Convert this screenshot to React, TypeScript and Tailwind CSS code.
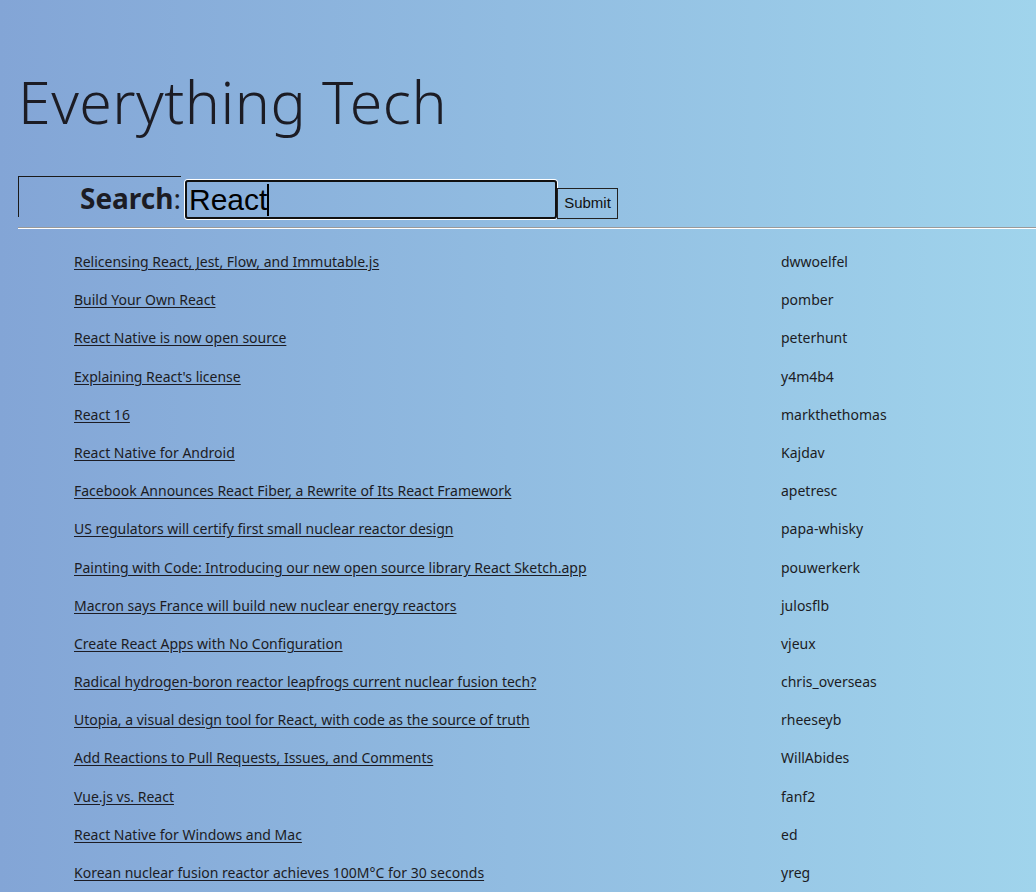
import React from "react";

const rows: [string, string][] = [
  ["Relicensing React, Jest, Flow, and Immutable.js", "dwwoelfel"],
  ["Build Your Own React", "pomber"],
  ["React Native is now open source", "peterhunt"],
  ["Explaining React's license", "y4m4b4"],
  ["React 16", "markthethomas"],
  ["React Native for Android", "Kajdav"],
  ["Facebook Announces React Fiber, a Rewrite of Its React Framework", "apetresc"],
  ["US regulators will certify first small nuclear reactor design", "papa-whisky"],
  ["Painting with Code: Introducing our new open source library React Sketch.app", "pouwerkerk"],
  ["Macron says France will build new nuclear energy reactors", "julosflb"],
  ["Create React Apps with No Configuration", "vjeux"],
  ["Radical hydrogen-boron reactor leapfrogs current nuclear fusion tech?", "chris_overseas"],
  ["Utopia, a visual design tool for React, with code as the source of truth", "rheeseyb"],
  ["Add Reactions to Pull Requests, Issues, and Comments", "WillAbides"],
  ["Vue.js vs. React", "fanf2"],
  ["React Native for Windows and Mac", "ed"],
  ["Korean nuclear fusion reactor achieves 100M°C for 30 seconds", "yreg"],
];

export default function App() {
  return (
    <div
      className="w-[1036px] h-[892px] overflow-hidden bg-gradient-to-r from-[#83a5d6] to-[#a0d4ec] text-[#1c1c24]"
      style={{ fontFamily: '"Segoe UI", "Noto Sans", "Open Sans", sans-serif' }}
    >
      <h1 className="pl-[18px] pt-[61px] text-[59px] leading-[80px] font-light tracking-[0.5px] h-[176px]">
        Everything Tech
      </h1>
      <div className="flex items-start pl-[18px]">
        <div className="w-[163px] h-[41px] border-t border-l border-[#1a1a1a] flex justify-end items-center">
          <span className="text-[28px] font-bold leading-none mt-[2px]">Search</span>
          <span className="text-[28px] leading-none mt-[2px]">:</span>
        </div>
        <div className="ml-[4px] mt-[4px] rounded-[3px] ring-1 ring-white">
          <div
            className="w-[372px] h-[39px] border-2 border-[#111] rounded-[3px] flex items-center pl-[2px] text-[30px] text-black"
            style={{ fontFamily: '"Liberation Sans", Arial, sans-serif' }}
          >
            React<span className="inline-block w-[2px] h-[32px] bg-black" />
          </div>
        </div>
        <button
          className="mt-[12px] w-[61px] h-[31px] border border-[#222] text-[15px] text-[#111] flex items-center justify-center"
          style={{ fontFamily: '"Liberation Sans", Arial, sans-serif' }}
        >
          Submit
        </button>
      </div>
      <div className="ml-[18px] mt-[8px] h-[2px] border-t border-[#9a9a9a] border-b-0 bg-white" />
      <div className="mt-[23px]">
        {rows.map(([t, a], i) => (
          <div key={i} className="flex h-[38.2px] items-start text-[14px] leading-[20px]">
            <div className="w-[781px] pl-[74px]">
              <a href="#" className="underline underline-offset-2">{t}</a>
            </div>
            <div>{a}</div>
          </div>
        ))}
      </div>
    </div>
  );
}
